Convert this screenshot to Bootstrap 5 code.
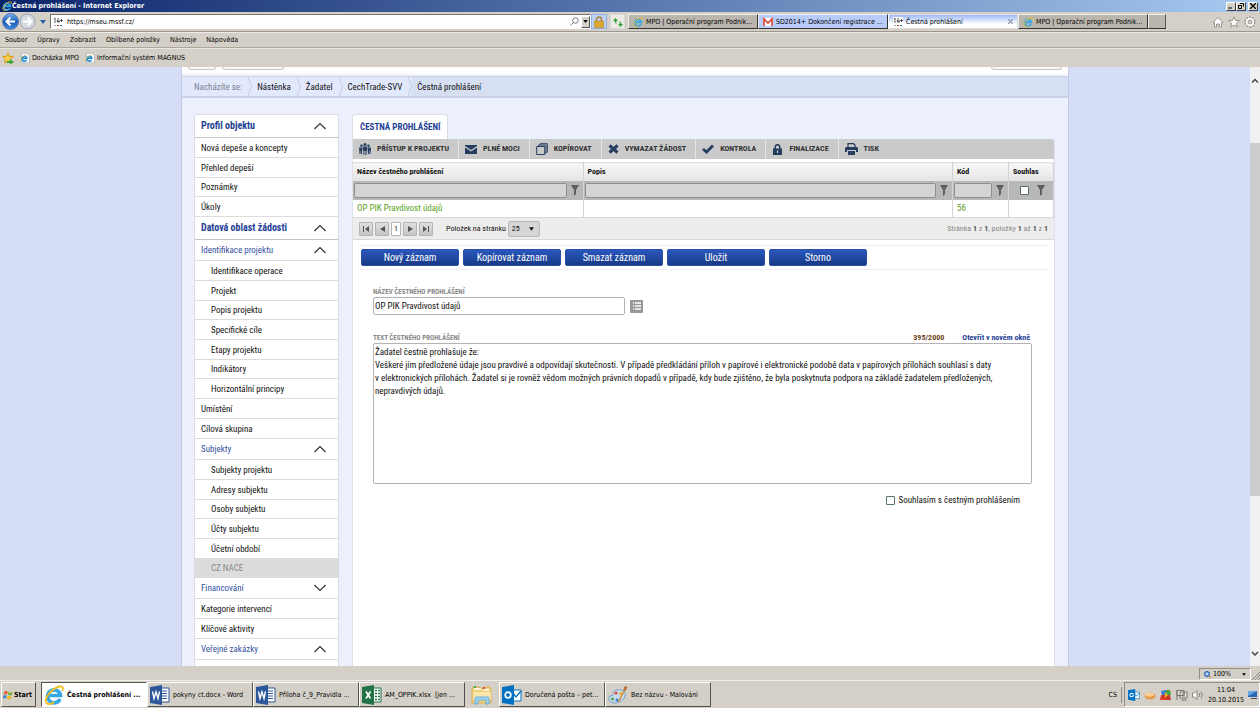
<!DOCTYPE html>
<html lang="cs">
<head>
<meta charset="utf-8">
<meta name="viewport" content="width=device-width, initial-scale=1">
<title>Čestná prohlášení</title>
<link href="https://cdn.jsdelivr.net/npm/bootstrap@5.3.0/dist/css/bootstrap.min.css" rel="stylesheet">
<style>
  :root { --chrome: #d4d0c8; --navy: #1f3f94; --line: #dcdcdc; }
  body { font-family: "DejaVu Sans Condensed", "DejaVu Sans", sans-serif; font-size: 7px; line-height: 10px; color: #000; background: var(--chrome); overflow: hidden; }
  a { color: inherit; text-decoration: none; }
  button, input, select, textarea { font: inherit; color: inherit; border-radius: 0; }
  svg { display: block; flex: none; }
  .ico10 { width: 10px; height: 10px; } .ico12 { width: 12px; height: 12px; } .ico20 { width: 20px; height: 20px; }
  .gap-px2 { gap: 2px; }

  /* window frame */
  .title-bar { height: 12px; padding-left: 2px; background: linear-gradient(90deg, #0a246a, #a6caf0); color: #fff; font-weight: 700; }
  .win-btn { width: 10px; height: 9px; padding: 0; background: var(--chrome); border: 1px solid; border-color: #fff #404040 #404040 #fff; display: flex; align-items: center; justify-content: center; }
  .win-btn:last-child { margin: 0 2px; }
  .tool-bar { height: 20px; padding-left: 2px; border-bottom: 1px solid #9c9890; }
  .nav-round { padding: 0; border: 0; background: none; }
  .address { height: 15px; flex: 0 1 541px; background: #fff; border: 1px solid; border-color: #77746e #fff #fff #77746e; padding-left: 2px; }
  .address input { border: 0; padding: 0; width: 100%; outline: 0; background: none; }
  .drop-btn { width: 10px; height: 12px; margin-left: 2px; padding: 0; border: 1px solid; border-color: #fff #555 #555 #fff; background: var(--chrome); }
  .sq-btn { width: 16px; height: 15px; padding: 0; display: flex; align-items: center; justify-content: center; background: #eceae5; border: 1px solid #d6d9dc; }
  .sq-btn.secure { background: #bed3f7; border-color: #8fb0dd; }
  .sq-btn.reload { width: 15px; margin: 0 3px; }
  .sq-btn.fresh { width: 18px; background: #bab6ae; border-color: #eee #555 #333 #eee; }
  .tab-btn { height: 15px; flex: 0 1 130px; padding: 0 4px; gap: 3px; white-space: nowrap; background: #bab6ae; border: 1px solid; border-color: #eee #333 #333 #eee; }
  .tab-btn.mail { background: #b9cbf8; }
  .tab-btn.current { background: linear-gradient(#9dbaf7, #fff 70%); border-color: #ddd #ddd #ddd #fff; }
  .menu-bar { height: 16px; padding-left: 5px; gap: 10px; border-top: 1px solid #eeece8; border-bottom: 1px solid #aaa79f; }
  .fav-bar { height: 19px; padding-left: 2px; gap: 6px; border-top: 1px solid #e8e6e0; }

  /* page */
  .viewport { background: #d6ddf6; font-family: "Roboto Condensed", "Liberation Sans Narrow", Roboto, sans-serif; font-size: 9px; line-height: 12px; color: #111; min-height: 0; overflow: hidden; }
  .sheet { width: 100%; max-width: 888px; background: #ecf0fc; border: solid #c3cbe3; border-width: 0 1px; overflow: hidden; }
  .head-strip { height: 9px; padding: 0 6px; background: linear-gradient(#fff 60%, #eceff8); }
  .stub { height: 3px; border: 1px solid #c8c8cc; border-top: 0; border-radius: 0 0 3px 3px; background: #f7f7f8; }
  .crumbs { height: 22px; background: #d7dff3; border-top: 1px solid #c9d1e3; border-bottom: 2px solid #cad2e6; }
  .crumbs li { height: 19px; display: flex; align-items: center; gap: 6px; padding-left: 5px; background: #e2e9fc; }
  .crumbs li:first-child { padding-left: 12px; color: #7b8190; }
  .crumbs li:last-child { background: none; }
  .columns { padding: 16px 13px 0 12px; gap: 13px; }
  .scroller { width: 10px; background: #f0f0f0; }
  .thumb { height: 59%; margin-top: 58px; background: #cdcdcd; }

  .side-col { width: 145px; }
  .side-menu { background: #fff; border: 1px solid #d9dce6; border-bottom: 0; border-radius: 3px 3px 0 0; }
  .side-menu ul { list-style: none; margin: 0; padding: 0; }
  .side-link { display: flex; align-items: center; justify-content: space-between; height: 20px; padding: 0 11px 0 6px; border-bottom: 1px solid var(--line); }
  li:nth-child(3n) > .thin { height: 19px; }
  .side-link.group { height: 21px; color: #3450a0; }
  .side-link.section { height: 23px; color: var(--navy); font-weight: 700; font-size: 10px; border-bottom-color: #c4c4c4; }
  .sub .side-link { padding-left: 16px; }
  .side-link.off { background: #dcdcdc; color: #888; }

  .panel-tab { background: #fff; color: var(--navy); border: 1px solid #d9dce6; border-bottom: 0; border-radius: 3px 3px 0 0; height: 25px; padding: 0 7px; }
  .panel-body { background: #fff; border: solid #dde1ea; border-width: 0 1px; }
  .actions { background: #cacaca; height: 20px; border-radius: 0 2px 0 0; font-size: 8px; font-weight: 700; color: #333; }
  .actions button { border: 0; border-right: 1px solid #e6e6e6; background: none; display: flex; align-items: center; gap: 6px; padding: 0 9px 0 6px; }
  .actions button:last-child { border-right: 0; }
  .actions svg { color: #263d60; }
  .grid-table { width: 100%; table-layout: fixed; border-collapse: collapse; margin-top: 3px; }
  .grid-table th, .grid-table td { padding: 0 4px; border-right: 1px solid #d3d3d3; }
  .grid-table thead th { height: 18px; background: linear-gradient(#f7f7f7, #e4e4e4); border-top: 1px solid #e2e2e2; font-size: 8px; font-weight: 700; }
  .grid-table .filters td { height: 19px; background: #b8b8b8; padding: 0 4px 0 1px; }
  .grid-table .filters input[type=text] { min-width: 0; flex: 1; height: 15px; border: 1px solid #8f8f8f; border-radius: 2px; background: #d4d4d4; padding: 0 3px; }
  .grid-table tbody td { height: 18px; color: #5ba01c; border-bottom: 1px solid #d9d9d9; }
  .c-name { width: 230px; } .c-code { width: 56px; } .c-agree { width: 45px; }
  .tick { width: 9px; height: 9px; margin: 0; appearance: none; background: #fff; border: 1px solid #58706f; border-radius: 1px; }
  .tick:checked { background: #58706f; }
  .pager { height: 22px; padding: 0 6px; background: #ededed; border-bottom: 1px solid #d9d9d9; font-size: 8px; }
  .pager button { width: 14px; height: 14px; padding: 0; border: 1px solid #b5b5b5; border-radius: 1px; background: linear-gradient(#dedede, #c6c6c6); display: flex; align-items: center; justify-content: center; color: #555; }
  .pager button.now { width: 10px; background: #fff; color: #222; }
  .pager label { padding: 0 2px 0 13px; }
  .range-note { color: #888; } .range-note b { color: #555; }
  .size-box { width: 32px; height: 16px; border: 1px solid #b9b9b9; border-radius: 2px; background: #d6d6d6; padding: 0 5px 0 3px; }
  .size-box select { appearance: none; border: 0; background: none; padding: 0; width: 100%; outline: 0; }
  .form-area { padding: 5px 6px 0 5px; }
  .commands { border: solid #ececec; border-width: 1px 0; height: 25px; padding-left: 3px; }
  .cmd { width: 98px; height: 17px; padding: 0; border: 1px solid #2b4fa8; border-radius: 2px; background: linear-gradient(#2b58be, #173a86); color: #fff; font-size: 10px; line-height: 15px; }
  .fields { padding: 17px 16px 0 15px; }
  .cap { font-size: 7px; line-height: 10px; font-weight: 700; color: #8a8a8a; }
  .field { border: 1px solid #b4b4b4; border-radius: 2px; background: #fff; padding: 0 1px; outline: 0; }
  .name-field { width: 252px; height: 18px; }
  .text-head { margin-top: 18px; }
  .small-note { font-size: 8px; line-height: 10px; color: #6b4322; margin-right: 2px; }
  .small-note.go { color: var(--navy); }
  .text-field { width: 100%; height: 141px; padding: 2px 1px; line-height: 13px; resize: none; display: block; }
  .list-btn { width: 13px; height: 13px; margin-left: 5px; padding: 0; border: 0; border-radius: 1px; background: #999; display: flex; align-items: center; justify-content: center; }
  .agree { margin-top: 10px; padding-right: 12px; }

  /* bottom bars */
  .status-bar { height: 14px; }
  .zoom-box { width: 52px; height: 12px; border: 1px solid; border-color: #918e87 #fff #fff #918e87; background: none; padding: 0 4px; }
  .task-bar { height: 28px; padding: 0 0 0 1px; border-top: 1px solid #f0eeea; }
  .task { height: 25px; flex: 0 1 106px; min-width: 0; padding: 0 2px; gap: 3px; background: var(--chrome); border: 1px solid; border-color: #fff #55534e #55534e #fff; white-space: nowrap; }
  .task.on { background: #fff; border-color: #55534e #fff #fff #55534e; font-weight: 700; }
  .start { flex: none; width: 35px; gap: 1px; padding: 0 1px; margin-right: 5px; font-weight: 700; }
  .quick { border: 0; background: none; padding: 0 6px; }
  .tray { height: 25px; padding: 0 1px 0 3px; gap: 4px; border: 1px solid; border-color: #918e87 #fff #fff #918e87; }
  .lang { padding-right: 4px; margin-right: 2px; border-right: 1px solid #918e87; line-height: 16px; }
</style>
</head>
<body class="d-flex flex-column vh-100">
<svg width="0" height="0" class="position-absolute" aria-hidden="true">
  <defs>
    <linearGradient id="ball" x2="0" y2="1"><stop stop-color="#79b4ee"/><stop offset=".5" stop-color="#1d5cb5"/><stop offset="1" stop-color="#3f8be0"/></linearGradient>
    <symbol id="ie" viewBox="0 0 20 20">
      <path d="M16 14A6.500 6.500 0 1 1 16.500 10.500H5" fill="none" stroke="#35a6e6" stroke-width="3.600"/>
      <path d="M3 18.500C-2 15 8 3 15.500 1.500c4-.7 4 2 2.500 4.500M3 18.500c2 1.500 5 0 7-1.500" fill="none" stroke="#f3bd1b" stroke-width="1.800"/>
    </symbol>
    <symbol id="iepage" viewBox="0 0 10 10"><path d="M1.500.3h5.500l2.500 2.500v7h-8z" fill="#fff" stroke="#8c9cae" stroke-width=".6"/><path d="M6.500 7A2.400 2.400 0 1 1 6.800 5.200H2" fill="none" stroke="#1687d9" stroke-width="1.500"/><path d="M0 8.500C1 5 4 2.500 7 2.500" fill="none" stroke="#f3bd1b" stroke-width=".7"/></symbol>
    <symbol id="mark14" viewBox="0 0 10 10"><path d="M0 0h10v10H0z" fill="#fff"/><path d="M1 2l1-1v5M5.500 1L4 4.500h2.500M6 3v3M7 3.500h3M8.500 2v3" fill="none" stroke="#333" stroke-width=".8"/><path d="M1 8.500h2" stroke="#aaa"/><path d="M4 8.500h2" stroke="#d33"/><path d="M7 8.500h2" stroke="#335cb0"/></symbol>
    <symbol id="up" viewBox="0 0 14 8"><path d="M1.500 7L7 1.500 12.500 7" fill="none" stroke="#333" stroke-width="1.200"/></symbol>
    <symbol id="down" viewBox="0 0 14 8"><path d="M1.500 1L7 6.500 12.500 1" fill="none" stroke="#333" stroke-width="1.200"/></symbol>
    <symbol id="crumb" viewBox="0 0 4 19"><path d="M0 0l3.500 9.500L0 19" fill="none" stroke="#c2cbdf"/></symbol>
    <symbol id="funnel" viewBox="0 0 8 11"><path d="M0 0h8L5 5v4l-2 2V5z" fill="#5e5e5e"/></symbol>
    <symbol id="caret" viewBox="0 0 6 4"><path d="M0 0h6L3 4z" fill="currentColor"/></symbol>
    <symbol id="word" viewBox="0 0 20 20"><path d="M10 3h9v14h-9z" fill="#fff" stroke="#2b579a"/><path d="M12 6h5M12 8.500h5M12 11h5M12 13.500h5" stroke="#2b579a"/><path d="M0 2l12-2v20L0 18z" fill="#2b579a"/><path d="M2.500 6.500l1.500 7 2-6.500 2 6.500 1.500-7" fill="none" stroke="#fff" stroke-width="1.400"/></symbol>
    <symbol id="excel" viewBox="0 0 20 20"><path d="M10 3h9v14h-9z" fill="#fff" stroke="#217346"/><path d="M13 5.500h2M16 5.500h2M13 8.500h2M16 8.500h2M13 11.500h2M16 11.500h2M13 14.500h2M16 14.500h2" stroke="#217346" stroke-width="1.500"/><path d="M0 2l12-2v20L0 18z" fill="#217346"/><path d="M4 6.500l4.500 7M8.500 6.500L4 13.500" stroke="#fff" stroke-width="1.600"/></symbol>
    <symbol id="outlook" viewBox="0 0 20 20"><path d="M10 5h9v11h-9z" fill="#fff" stroke="#0072c6"/><path d="M11 8l3 4 5-6" fill="none" stroke="#0072c6" stroke-width="1.300"/><path d="M0 2l12-2v20L0 18z" fill="#0072c6"/><circle cx="6" cy="10" r="2.800" fill="none" stroke="#fff" stroke-width="1.700"/></symbol>
  </defs>
</svg>

<header class="flex-shrink-0">
  <div class="title-bar d-flex align-items-center">
    <svg class="ico10"><use href="#ie"/></svg>
    <span class="flex-grow-1">Čestná prohlášení - Internet Explorer</span>
    <button class="win-btn" aria-label="Minimalizovat"><svg width="6" height="6"><path d="M0 5h4" stroke="#000"/></svg></button>
    <button class="win-btn" aria-label="Obnovit"><svg width="6" height="6"><path d="M2 .5h3.500v3M.5 2.500h3v3h-3z" fill="none" stroke="#000"/></svg></button>
    <button class="win-btn" aria-label="Zavřít"><svg width="6" height="6"><path d="M0 0l6 6M6 0L0 6" stroke="#000" stroke-width="1.300"/></svg></button>
  </div>

  <div class="tool-bar d-flex align-items-center">
    <button class="nav-round" aria-label="Zpět"><svg width="17" height="17" viewBox="0 0 17 17"><circle cx="8.500" cy="8.500" r="8" fill="url(#ball)" stroke="#5b7cb0"/><path d="M13 8.500H5M8.500 4.500l-4 4 4 4" fill="none" stroke="#fff" stroke-width="2"/></svg></button>
    <button class="nav-round" aria-label="Vpřed"><svg width="17" height="17" viewBox="0 0 17 17"><circle cx="8.500" cy="8.500" r="7.500" fill="#d5dae2" stroke="#9da5b2"/><path d="M4 8.500h8M8.500 4.500l4 4-4 4" fill="none" stroke="#fff" stroke-width="2"/></svg></button>
    <svg class="mx-1" width="6" height="4" color="#2463a5"><use href="#caret"/></svg>
    <div class="address d-flex align-items-center">
      <svg class="ico10 me-1"><use href="#mark14"/></svg>
      <input type="text" aria-label="Adresa" value="https://mseu.mssf.cz/">
      <svg width="9" height="9"><circle cx="5.500" cy="3.500" r="2.800" fill="none" stroke="#777"/><path d="M3.500 5.500L.5 8.500" stroke="#777"/></svg>
      <button class="drop-btn d-flex align-items-center justify-content-center" aria-label="Historie adres"><svg width="5" height="3"><use href="#caret"/></svg></button>
    </div>
    <button class="sq-btn secure" aria-label="Zabezpečení"><svg width="10" height="12" viewBox="0 0 10 12"><path d="M2.500 6V3.500a2.500 2.500 0 0 1 5 0V6" fill="none" stroke="#a9813a" stroke-width="1.500"/><path d="M.5 5h9v6.500h-9z" fill="#dca72e" stroke="#b4831b" stroke-width=".6"/></svg></button>
    <button class="sq-btn reload" aria-label="Obnovit stránku"><svg width="10" height="10" viewBox="0 0 10 10"><path d="M2.500 1L0 4h1.700c0 2 1 2.500 2.300 2.500C3 6 3.300 5 3.300 4H5zM7.500 10L10 7H8.300C8.300 5 7.500 4.500 6 4.500c1 .5.700 1.500.7 2.500H5z" fill="#35a135"/></svg></button>
    <nav class="d-flex flex-grow-1">
      <a href="#" class="tab-btn d-flex align-items-center"><svg class="ico10"><use href="#ie"/></svg>MPO | Operační program Podnik...</a>
      <a href="#" class="tab-btn mail d-flex align-items-center"><svg class="ico10" viewBox="0 0 10 10"><path d="M0 1h10v8H0z" fill="#fff"/><path d="M1 9V2l4 4 4-4v7" fill="none" stroke="#d9453a" stroke-width="1.700"/></svg>SD2014+ Dokončení registrace ...</a>
      <a href="#" class="tab-btn current d-flex align-items-center"><svg class="ico10"><use href="#mark14"/></svg><span class="flex-grow-1">Čestná prohlášení</span><svg width="5" height="5"><path d="M0 0l5 5M5 0L0 5" stroke="#8a93a8" stroke-width="1.200"/></svg></a>
      <a href="#" class="tab-btn d-flex align-items-center"><svg class="ico10"><use href="#ie"/></svg>MPO | Operační program Podnik...</a>
      <button class="sq-btn fresh" aria-label="Nová karta"></button>
    </nav>
    <div class="d-flex gap-1 me-1">
      <svg class="ico12" viewBox="0 0 12 12"><path d="M1 6.500L6 1.500l5 5H9.500V11h-2V8h-3v3h-2V6.500z" fill="#fff" stroke="#99958d"/></svg>
      <svg class="ico12" viewBox="0 0 12 12"><path d="M6 .8l1.500 3.600 3.900.2-3 2.600 1 3.900L6 9l-3.400 2.100 1-3.900-3-2.600 3.900-.2z" fill="#fff" stroke="#99958d"/></svg>
      <svg class="ico12" viewBox="0 0 12 12"><circle cx="6" cy="6" r="4.800" fill="#fff" stroke="#99958d" stroke-dasharray="2 1" stroke-width="1.500"/><circle cx="6" cy="6" r="2" fill="#d4d0c8" stroke="#99958d"/></svg>
    </div>
  </div>

  <nav class="menu-bar d-flex align-items-center">
    <a href="#">Soubor</a><a href="#">Úpravy</a><a href="#">Zobrazit</a><a href="#">Oblíbené položky</a><a href="#">Nástroje</a><a href="#">Nápověda</a>
  </nav>
  <nav class="fav-bar d-flex align-items-center">
    <svg class="ico12" viewBox="0 0 12 12"><path d="M6 .8l1.500 3.600 3.900.2-3 2.600 1 3.900L6 9l-3.400 2.100 1-3.900-3-2.600 3.900-.2z" fill="#fbd14b" stroke="#d99a1c"/><path d="M5 9h3V7l4 3-4 2.500V11H5z" fill="#3aa53a"/></svg>
    <a class="d-flex gap-px2 align-items-center" href="#"><svg class="ico10"><use href="#iepage"/></svg>Docházka MPO</a>
    <a class="d-flex gap-px2 align-items-center" href="#"><svg class="ico10"><use href="#iepage"/></svg>Informační systém MAGNUS</a>
  </nav>
</header>

<div class="viewport flex-grow-1 d-flex">
  <div class="flex-grow-1 d-flex justify-content-center overflow-hidden">
    <div class="sheet">
      <div class="head-strip d-flex"><span class="stub" style="width:28px"></span><span class="stub me-auto" style="width:62px;margin-left:6px"></span><span class="stub" style="width:71px"></span></div>
      <ol class="crumbs list-unstyled d-flex mb-0">
        <li>Nacházíte se:<svg width="4" height="19"><use href="#crumb"/></svg></li>
        <li><a href="#">Nástěnka</a><svg width="4" height="19"><use href="#crumb"/></svg></li>
        <li><a href="#">Žadatel</a><svg width="4" height="19"><use href="#crumb"/></svg></li>
        <li><a href="#">CechTrade-SVV</a><svg width="4" height="19"><use href="#crumb"/></svg></li>
        <li>Čestná prohlášení</li>
      </ol>

      <div class="columns d-flex">
        <nav class="side-col flex-shrink-0">
          <ul class="side-menu list-unstyled mb-0">
            <li><a class="side-link section" href="#">Profil objektu<svg width="14" height="8"><use href="#up"/></svg></a>
              <ul>
                <li><a class="side-link thin" href="#">Nová depeše a koncepty</a></li>
                <li><a class="side-link thin" href="#">Přehled depeší</a></li>
                <li><a class="side-link thin" href="#">Poznámky</a></li>
                <li><a class="side-link thin" href="#">Úkoly</a></li>
              </ul></li>
            <li><a class="side-link section" href="#">Datová oblast žádosti<svg width="14" height="8"><use href="#up"/></svg></a></li>
            <li><a class="side-link group" href="#">Identifikace projektu<svg width="14" height="8"><use href="#up"/></svg></a>
              <ul class="sub">
                <li><a class="side-link thin" href="#">Identifikace operace</a></li>
                <li><a class="side-link thin" href="#">Projekt</a></li>
                <li><a class="side-link thin" href="#">Popis projektu</a></li>
                <li><a class="side-link thin" href="#">Specifické cíle</a></li>
                <li><a class="side-link thin" href="#">Etapy projektu</a></li>
                <li><a class="side-link thin" href="#">Indikátory</a></li>
                <li><a class="side-link thin" href="#">Horizontální principy</a></li>
              </ul></li>
            <li><a class="side-link" href="#">Umístění</a></li>
            <li><a class="side-link" href="#">Cílová skupina</a></li>
            <li><a class="side-link group" href="#">Subjekty<svg width="14" height="8"><use href="#up"/></svg></a>
              <ul class="sub">
                <li><a class="side-link thin" href="#">Subjekty projektu</a></li>
                <li><a class="side-link thin" href="#">Adresy subjektu</a></li>
                <li><a class="side-link thin" href="#">Osoby subjektu</a></li>
                <li><a class="side-link thin" href="#">Účty subjektu</a></li>
                <li><a class="side-link thin" href="#">Účetní období</a></li>
                <li><a class="side-link thin off" href="#">CZ NACE</a></li>
              </ul></li>
            <li><a class="side-link group" href="#">Financování<svg width="14" height="8"><use href="#down"/></svg></a></li>
            <li><a class="side-link" href="#">Kategorie intervencí</a></li>
            <li><a class="side-link" href="#">Klíčové aktivity</a></li>
            <li><a class="side-link group" href="#">Veřejné zakázky<svg width="14" height="8"><use href="#up"/></svg></a>
              <ul class="sub"><li><a class="side-link thin" href="#">Veřejné zakázky</a></li></ul></li>
          </ul>
        </nav>

        <main class="flex-grow-1 d-flex flex-column">
          <div class="d-flex"><a href="#" class="panel-tab d-flex align-items-center fw-bold">ČESTNÁ PROHLÁŠENÍ</a></div>
          <div class="panel-body flex-grow-1">
            <div class="actions d-flex">
              <button><svg width="12" height="12" viewBox="0 0 12 12"><g fill="currentColor"><circle cx="2.500" cy="2.700" r="1.300"/><circle cx="9.500" cy="2.700" r="1.300"/><circle cx="6" cy="1.500" r="1.500"/><path d="M0 4.500h3.500v3H3V11H2V8H1.500v3H.5zM8.500 4.500H12L11.500 11h-1V8H10v3H9zM4 3.500h4v4h-.5V12h-1V8h-1v4h-1V7.500H4z"/></g></svg>PŘÍSTUP K PROJEKTU</button>
              <button><svg width="12" height="9" viewBox="0 0 12 9"><path d="M0 0h12v1L6 5 0 1zM0 2.500l6 4 6-4V9H0z" fill="currentColor"/></svg>PLNÉ MOCI</button>
              <button><svg width="12" height="12" viewBox="0 0 12 12"><path d="M.7 3.500h8v8h-8zM2.500 3V2h7.500v8H9M4 1.500V.7h7.300v8.500H10.500" fill="none" stroke="currentColor"/></svg>KOPÍROVAT</button>
              <button><svg width="11" height="10" viewBox="0 0 11 10"><path d="M1.500 1.500l8 7M9.500 1.500l-8 7" stroke="currentColor" stroke-width="3"/></svg>VYMAZAT ŽÁDOST</button>
              <button><svg width="12" height="10" viewBox="0 0 12 10"><path d="M1 5l3.500 3L11 1.500" fill="none" stroke="currentColor" stroke-width="2.800"/></svg>KONTROLA</button>
              <button><svg width="11" height="11" viewBox="0 0 11 11"><path d="M3.200 5V3a2.300 2.300 0 0 1 4.600 0v2" fill="none" stroke="currentColor" stroke-width="1.500"/><path d="M1 4.500h9V11H1z" fill="currentColor"/><path d="M5.500 6.500v2.500" stroke="#cacaca" stroke-width="1.200"/></svg>FINALIZACE</button>
              <button><svg width="13" height="12" viewBox="0 0 13 12"><path d="M3 4V.7h5.500L10 2v2" fill="none" stroke="currentColor" stroke-width="1.200"/><path d="M1 4h11l1 1v4h-2V7H2v2H0V5z" fill="currentColor"/><path d="M3 8h7v4H3z" fill="currentColor"/></svg>TISK</button>
            </div>
            <table class="grid-table">
              <colgroup><col class="c-name"><col><col class="c-code"><col class="c-agree"></colgroup>
              <thead>
                <tr><th>Název čestného prohlášení</th><th>Popis</th><th>Kód</th><th>Souhlas</th></tr>
                <tr class="filters">
                  <td><div class="d-flex align-items-center gap-1"><input type="text" aria-label="Filtr názvu"><svg width="8" height="11"><use href="#funnel"/></svg></div></td>
                  <td><div class="d-flex align-items-center gap-1"><input type="text" aria-label="Filtr popisu"><svg width="8" height="11"><use href="#funnel"/></svg></div></td>
                  <td><div class="d-flex align-items-center gap-1"><input type="text" aria-label="Filtr kódu"><svg width="8" height="11"><use href="#funnel"/></svg></div></td>
                  <td><div class="d-flex align-items-center justify-content-end gap-2 pe-1"><input class="tick" type="checkbox" aria-label="Filtr souhlasu"><svg width="8" height="11"><use href="#funnel"/></svg></div></td>
                </tr>
              </thead>
              <tbody><tr><td>OP PIK Pravdivost údajů</td><td></td><td>56</td><td></td></tr></tbody>
            </table>
            <div class="pager d-flex align-items-center">
              <div class="d-flex gap-px2 align-items-center">
                <button aria-label="První"><svg width="6" height="6"><path d="M0 0h1v6H0zM6 0v6L2 3z" fill="currentColor"/></svg></button>
                <button aria-label="Předchozí"><svg width="5" height="6"><path d="M5 0v6L0 3z" fill="currentColor"/></svg></button>
                <button class="now">1</button>
                <button aria-label="Další"><svg width="5" height="6"><path d="M0 0v6l5-3z" fill="currentColor"/></svg></button>
                <button aria-label="Poslední"><svg width="6" height="6"><path d="M5 0h1v6H5zM0 0v6l4-3z" fill="currentColor"/></svg></button>
              </div>
              <label for="size">Položek na stránku</label>
              <div class="size-box d-flex align-items-center"><select id="size"><option>25</option><option>50</option></select><svg width="5" height="4"><use href="#caret"/></svg></div>
              <span class="ms-auto range-note">Stránka <b>1</b> z <b>1</b>, položky <b>1</b> až <b>1</b> z <b>1</b></span>
            </div>

            <div class="form-area">
              <div class="commands d-flex align-items-center gap-1">
                <button class="cmd">Nový záznam</button><button class="cmd">Kopírovat záznam</button><button class="cmd">Smazat záznam</button><button class="cmd">Uložit</button><button class="cmd">Storno</button>
              </div>
              <div class="fields">
                <label class="cap d-block" for="nm">NÁZEV ČESTNÉHO PROHLÁŠENÍ</label>
                <div class="d-flex align-items-center">
                  <input class="field name-field" id="nm" type="text" value="OP PIK Pravdivost údajů">
                  <button class="list-btn" aria-label="Seznam"><svg width="8" height="8"><path d="M0 1h1M2 1h6M0 4h1M2 4h6M0 7h1M2 7h6" stroke="#fff" stroke-width="1.300"/></svg></button>
                </div>
                <div class="text-head d-flex align-items-end">
                  <label class="cap me-auto" for="tx">TEXT ČESTNÉHO PROHLÁŠENÍ</label>
                  <b class="small-note">395/2000</b><a class="small-note go fw-bold ms-3" href="#">Otevřít v novém okně</a>
                </div>
                <textarea class="field text-field" id="tx">Žadatel čestně prohlašuje že:
Veškeré jím předložené údaje jsou pravdivé a odpovídají skutečnosti. V případě předkládání příloh v papírové i elektronické podobě data v papírových přílohách souhlasí s daty
v elektronických přílohách. Žadatel si je rovněž vědom možných právních dopadů v případě, kdy bude zjištěno, že byla poskytnuta podpora na základě žadatelem předložených,
nepravdivých údajů.</textarea>
                <label class="agree d-flex align-items-center justify-content-end gap-1"><input class="tick" type="checkbox">Souhlasím s čestným prohlášením</label>
              </div>
            </div>
          </div>
        </main>
      </div>
    </div>
  </div>
  <div class="scroller flex-shrink-0 d-flex flex-column align-items-center">
    <svg class="mt-2" width="8" height="10"><path d="M1 7.500l3-3 3 3" fill="none" stroke="#444" stroke-width="1.500"/></svg>
    <div class="thumb w-100"></div>
    <svg class="mt-auto mb-2" width="8" height="8"><path d="M1 2l3 3 3-3" fill="none" stroke="#444" stroke-width="1.500"/></svg>
  </div>
</div>

<footer class="flex-shrink-0">
  <div class="status-bar d-flex justify-content-end align-items-end">
    <button class="zoom-box d-flex align-items-center gap-px2"><svg width="7" height="7"><circle cx="3" cy="3" r="2.500" fill="#4f93e0" stroke="#2c62ae"/><path d="M5 5l2 2" stroke="#b88a3c" stroke-width="1.300"/><path d="M1.500 3h3M3 1.500v3" stroke="#fff" stroke-width=".8"/></svg><span class="flex-grow-1 text-start">100%</span><svg width="4" height="3"><use href="#caret"/></svg></button>
    <svg width="9" height="9"><path d="M1 9l8-8M4 9l5-5M7 9l2-2" stroke="#87847d"/></svg>
  </div>
  <div class="task-bar d-flex align-items-center">
    <button class="task start d-flex align-items-center"><svg class="ico10" viewBox="0 0 10 10"><path d="M1.500 1.500Q3 .5 4.700 1.500L4 4.500Q2.500 3.700.7 4.500z" fill="#e8542c"/><path d="M5.500 2Q7.500 3 9.500 2L8.700 5Q6.700 5.800 4.800 4.800z" fill="#6db42e"/><path d="M.5 5.500Q2.300 4.600 3.800 5.500L3 8.500Q1.500 7.700-.2 8.500z" fill="#3d7fd6"/><path d="M4.500 5.800Q6.500 6.800 8.400 6L7.700 9Q5.700 9.800 3.800 8.800z" fill="#f6b719"/></svg>Start</button>
    <button class="task on d-flex align-items-center"><svg class="ico20"><use href="#ie"/></svg>Čestná prohlášení ...</button>
    <button class="task d-flex align-items-center"><svg class="ico20"><use href="#word"/></svg>pokyny ct.docx - Word</button>
    <button class="task d-flex align-items-center"><svg class="ico20"><use href="#word"/></svg>Příloha č_9_Pravidla ...</button>
    <button class="task d-flex align-items-center"><svg class="ico20"><use href="#excel"/></svg>AM_OPPIK.xlsx&nbsp; [jen ...</button>
    <button class="quick" aria-label="Průzkumník"><svg width="22" height="20" viewBox="0 0 22 20"><path d="M1 3q0-1 1-1h6l1 1h4l1-1h5l1 2v14H1z" fill="#f0cf79" stroke="#d6ae50"/><path d="M3 4h7M12 5h6" stroke="#fff" stroke-width="1.500"/><path d="M3 2h2" stroke="#4ea64a" stroke-width="2"/><path d="M12 3h2" stroke="#d7503a" stroke-width="2"/><path d="M2 7h18v8H2z" fill="#f9e6a8"/><path d="M4 19v-6q0-1 1-1h12q1 0 1 1v6h-3v-4H7v4z" fill="#9ed2ef" stroke="#6bb0dc"/></svg></button>
    <button class="task d-flex align-items-center"><svg class="ico20"><use href="#outlook"/></svg>Doručená pošta – pet...</button>
    <button class="task d-flex align-items-center"><svg class="ico20" viewBox="0 0 20 20"><path d="M9 5c6-1 9 2 8 6s-5 7-10 7-7-3-6-6c.5-2 3-.5 4-2S4 6 9 5z" fill="#c5dcf0" stroke="#7c9fc0"/><circle cx="8" cy="8" r="1.600" fill="#d84b3c"/><circle cx="12.500" cy="8.500" r="1.500" fill="#e9b52c"/><circle cx="4.500" cy="14" r="1.500" fill="#4aa64c"/><circle cx="9" cy="15" r="1.500" fill="#3d78ca"/><path d="M17 4L10.500 17" stroke="#c88a48" stroke-width="1.600"/><path d="M15.500 5l1-4 3 1-2 4z" fill="#b86f35"/></svg><span>Bez názvu - Malování</span></button>
    <span class="lang ms-auto">CS</span>
    <div class="tray d-flex align-items-center">
      <svg class="ico12" viewBox="0 0 20 20"><use href="#outlook"/></svg>
      <svg class="ico12" viewBox="0 0 12 12"><ellipse cx="6" cy="7" rx="5.500" ry="3.500" fill="#e79a4c"/><ellipse cx="5.500" cy="5.500" rx="4.500" ry="2" fill="#f8cf96"/></svg>
      <svg class="ico12" viewBox="0 0 12 12"><path d="M1 2l5-1v5H2z" fill="#3b7cd0"/><path d="M6 1h4l1 5H6z" fill="#43a047"/><path d="M1 6h5v5H0z" fill="#d83a2c"/><path d="M6 6h4l1 5H6z" fill="#c8372b"/><path d="M5 3l3 3-3 3z" fill="#f3b51c"/></svg>
      <svg class="ico12" viewBox="0 0 12 12"><path d="M1 1.500h7v5H1zM4 3h7v6H4zM5.500 11h5M1 1v10" fill="#ece9e2" stroke="#77746e"/><path d="M6 5h3M6 7h3" stroke="#77746e"/></svg>
      <svg class="ico12" viewBox="0 0 12 12"><path d="M.5 4h2L5 1.500v9L2.500 8h-2z" fill="#fff" stroke="#8a8780"/><path d="M7 4q1.500 2 0 4M9 2.500q2.500 3.500 0 7" fill="none" stroke="#8a8780"/></svg>
      <div class="text-center">11:04<br>20.10.2015</div>
      <svg class="ico10" viewBox="0 0 10 10"><path d="M0 1h9v6H0z" fill="#2a66b8"/><path d="M0 1h9L0 6z" fill="#69a6e6"/><path d="M3 8h6v1H3z" fill="#445"/></svg>
    </div>
  </div>
</footer>
<script src="https://cdn.jsdelivr.net/npm/bootstrap@5.3.0/dist/js/bootstrap.bundle.min.js"></script>
</body>
</html>
